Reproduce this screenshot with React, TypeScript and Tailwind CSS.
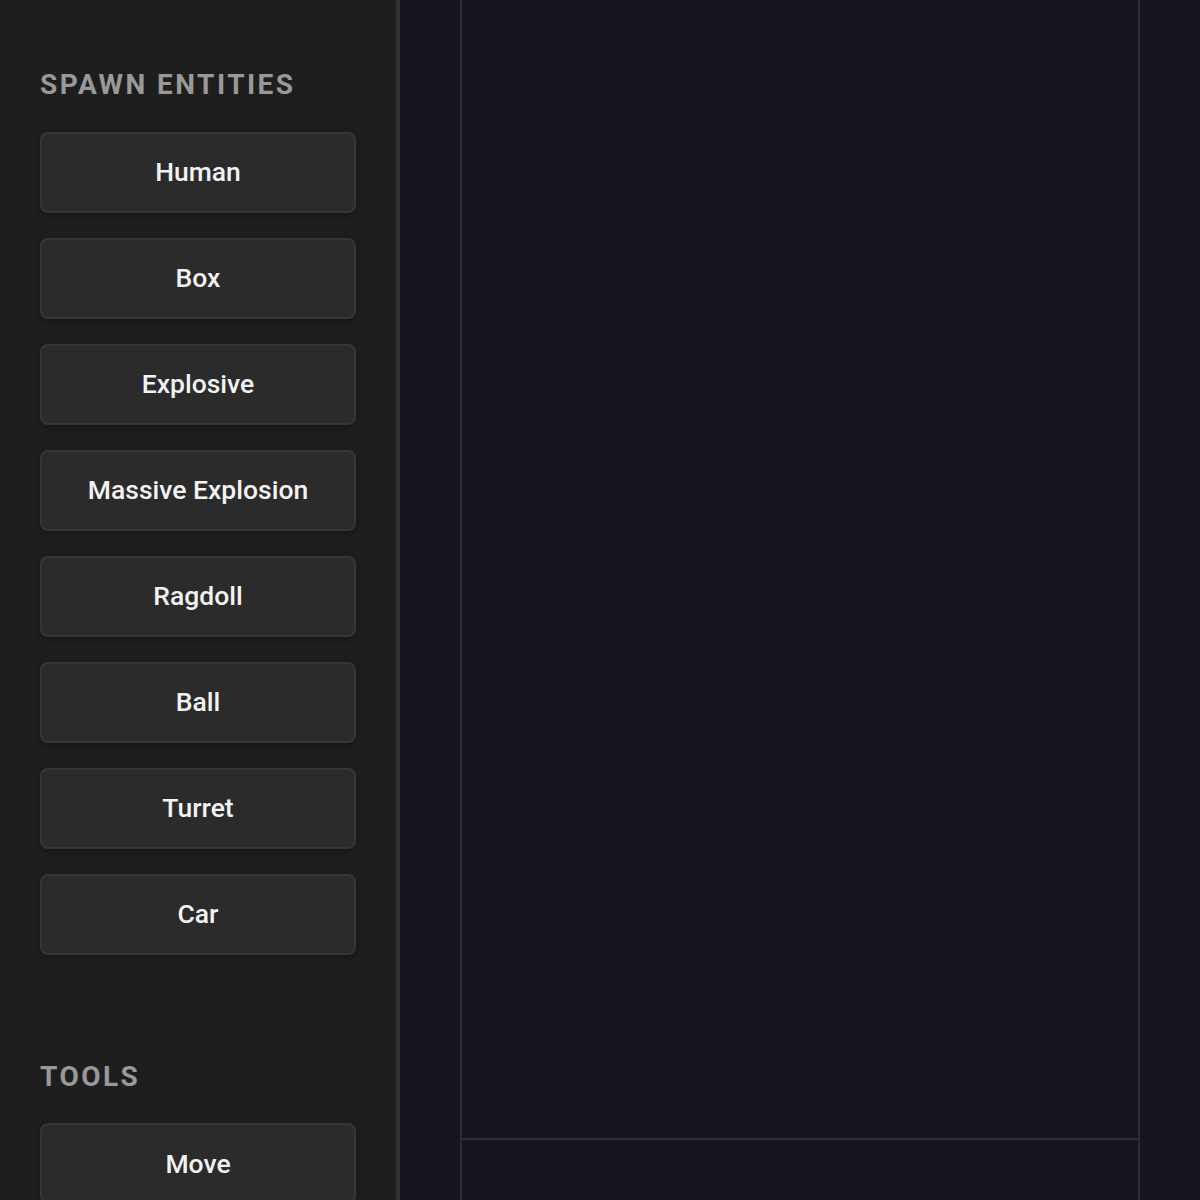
const spawnItems = ['Human', 'Box', 'Explosive', 'Massive Explosion', 'Ragdoll', 'Ball', 'Turret', 'Car']
const toolItems = ['Move']

function PanelButton({ label }: { label: string }) {
  return (
    <button className="h-[81px] w-full shrink-0 rounded-lg border-2 border-[#363636] bg-[#2b2b2b] text-[26.5px] font-medium text-[#f2f2f2] shadow-[0_2px_6px_rgba(0,0,0,0.3)]">
      {label}
    </button>
  )
}

function Section({ title, items }: { title: string; items: string[] }) {
  return (
    <section className="flex flex-col">
      <h2 className="mt-7 mb-[30px] text-[28px] font-bold uppercase leading-[1.2] tracking-[2.45px] text-[#999999]">
        {title}
      </h2>
      <div className="flex flex-col gap-[25px]">
        {items.map((item) => (
          <PanelButton key={item} label={item} />
        ))}
      </div>
    </section>
  )
}

export default function App() {
  return (
    <div
      className="flex h-[1200px] w-[1200px] overflow-hidden bg-[#15161f]"
      style={{ fontFamily: 'Roboto, "Noto Sans", sans-serif' }}
    >
      {/* Sidebar */}
      <aside className="flex w-[400px] shrink-0 flex-col gap-[77px] border-r-4 border-[#333333] bg-[#1e1e1e] px-10 pt-10">
        <Section title="Spawn Entities" items={spawnItems} />
        <Section title="Tools" items={toolItems} />
      </aside>

      {/* Canvas area */}
      <main className="flex-1 pl-[60px]">
        <div className="flex h-[1400px] w-[680px] flex-col border-x-2 border-[#2c2d36]">
          <div className="h-[1140px] shrink-0 border-b-2 border-[#2c2d36]" />
        </div>
      </main>
    </div>
  )
}
